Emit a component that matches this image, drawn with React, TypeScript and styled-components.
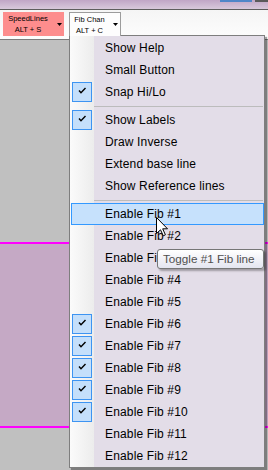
import React from 'react'
import styled, { createGlobalStyle } from 'styled-components'

const GlobalStyle = createGlobalStyle`
  html, body {
    margin: 0;
    padding: 0;
    background: #c0c0c0;
    overflow: hidden;
  }
  * {
    box-sizing: border-box;
  }
`

type MenuEntry =
    | { kind: 'item'; label: string; checked?: boolean; active?: boolean }
    | { kind: 'separator' }

const entries: MenuEntry[] = [
    { kind: 'item', label: 'Show Help' },
    { kind: 'item', label: 'Small Button' },
    { kind: 'item', label: 'Snap Hi/Lo', checked: true },
    { kind: 'separator' },
    { kind: 'item', label: 'Show Labels', checked: true },
    { kind: 'item', label: 'Draw Inverse' },
    { kind: 'item', label: 'Extend base line' },
    { kind: 'item', label: 'Show Reference lines' },
    { kind: 'separator' },
    ...Array.from({ length: 12 }, (_, i): MenuEntry => ({
        kind: 'item',
        label: `Enable Fib #${i + 1}`,
        checked: i >= 5 && i <= 9,
        active: i === 0,
    })),
]

export default function App() {
    return (
        <Screen>
            <GlobalStyle />
            <TitleStrip>
                <TitleTab $tone="blue" />
                <TitleTab $tone="dark" />
            </TitleStrip>

            <Toolbar>
                <ToolButton $tone="alert">
                    <ButtonLabel>
                        <span>SpeedLines</span>
                        <span>ALT + S</span>
                    </ButtonLabel>
                    <DropArrow />
                </ToolButton>
                <ToolButton $tone="open">
                    <ButtonLabel>
                        <span>Fib Chan</span>
                        <span>ALT + C</span>
                    </ButtonLabel>
                    <DropArrow />
                </ToolButton>
            </Toolbar>

            <ChartArea>
                <Band $tone="empty" $height={202} />
                <Band $tone="line" $height={2} />
                <Band $tone="pane" $height={182} />
                <Band $tone="line" $height={2} />
                <Band $tone="empty" />
            </ChartArea>

            <Menu>
                {entries.map((entry, i) =>
                    entry.kind === 'separator' ? (
                        <Separator key={i} />
                    ) : (
                        <Row key={i} $active={entry.active}>
                            <CheckSlot $checked={entry.checked}>
                                {entry.checked && (
                                    <svg width="18" height="18" viewBox="0 0 18 18">
                                        <polyline
                                            points="6,7.5 8,9.8 12.5,5"
                                            fill="none"
                                            stroke="#000"
                                            strokeWidth="1.4"
                                        />
                                    </svg>
                                )}
                            </CheckSlot>
                            <RowText>{entry.label}</RowText>
                        </Row>
                    )
                )}
            </Menu>

            <Tooltip>Toggle #1 Fib line</Tooltip>
            <Cursor />
        </Screen>
    )
}

function DropArrow() {
    return (
        <Arrow width="5" height="3" viewBox="0 0 5 3">
            <polygon points="0,0 5,0 2.5,3" fill="#000" />
        </Arrow>
    )
}

function Cursor() {
    return (
        <Pointer width="13" height="20" viewBox="0 0 13 20">
            <path
                d="M0.5 0.5 L0.5 16.5 L4.5 12.8 L7.3 18.8 L9.4 17.8 L6.7 11.8 L11.5 11.8 Z"
                fill="#fff"
                stroke="#000"
                strokeWidth="1"
                strokeLinejoin="miter"
            />
        </Pointer>
    )
}

const Screen = styled.div`
  position: relative;
  width: 268px;
  height: 470px;
  display: flex;
  flex-direction: column;
  overflow: hidden;
  font-family: "Liberation Sans", Arial, sans-serif;
`

const TitleStrip = styled.div`
  height: 9px;
  display: flex;
  justify-content: flex-end;
  align-items: flex-start;
  gap: 2px;
  background: linear-gradient(#c0a6c6, #d8c9dc);
`

const TitleTab = styled.div<{ $tone: 'blue' | 'dark' }>`
  height: 2px;
  width: ${p => (p.$tone === 'blue' ? '32px' : '13px')};
  margin-right: ${p => (p.$tone === 'blue' ? '1px' : '0')};
  background: ${p => (p.$tone === 'blue' ? '#4f86c8' : '#5a5a5a')};
`

const Toolbar = styled.div`
  height: 31px;
  display: flex;
  align-items: flex-start;
  gap: 5px;
  padding: 2px 0 0 3px;
  border-top: 1px solid #5e5e5e;
  border-bottom: 1px solid #7c7c7c;
  background: linear-gradient(#f5f5f5, #fdfdfd);
`

const ToolButton = styled.div<{ $tone: 'alert' | 'open' }>`
  position: relative;
  z-index: 2;
  display: flex;
  align-items: center;
  height: 24px;
  width: ${p => (p.$tone === 'alert' ? '61px' : '52px')};
  color: #000;
  background: ${p => (p.$tone === 'alert' ? '#fd8d8d' : '#fdfdfd')};
  border: ${p => (p.$tone === 'alert' ? 'none' : '1px solid #9c9c9c')};
  border-bottom: none;
`

const ButtonLabel = styled.div`
  flex: 1;
  display: flex;
  flex-direction: column;
  align-items: center;
  font-size: 7.5px;
  line-height: 11px;
  white-space: nowrap;
`

const Arrow = styled.svg`
  flex: none;
  margin: 0 2px 0 4px;
`

const ChartArea = styled.div`
  flex: 1;
  display: flex;
  flex-direction: column;
`

const bandColors = {
    empty: '#c0c0c0',
    line: '#ff00ff',
    pane: '#c5a9c5',
}

const Band = styled.div<{ $tone: keyof typeof bandColors; $height?: number }>`
  background: ${p => bandColors[p.$tone]};
  ${p => (p.$height ? `height: ${p.$height}px; flex: none;` : 'flex: 1;')}
`

const Menu = styled.div`
  position: absolute;
  z-index: 1;
  left: 69px;
  top: 35px;
  width: 196px;
  height: 433px;
  padding-top: 1px;
  border: 1px solid #7e7e7e;
  background: linear-gradient(to right, #fbfbfb, #ececec 24px, #e3dde8 24px);
  box-shadow: 2px 2px 1px rgba(0, 0, 0, 0.35);
`

const Row = styled.div<{ $active?: boolean }>`
  display: flex;
  align-items: center;
  height: 22px;
  margin-left: 1px;
  border: 1px solid ${p => (p.$active ? '#3399ff' : 'transparent')};
  background: ${p => (p.$active ? '#c6e1fc' : 'transparent')};
`

const CheckSlot = styled.div<{ $checked?: boolean }>`
  flex: none;
  width: 20px;
  height: 20px;
  border: 1px solid ${p => (p.$checked ? '#3d94f2' : 'transparent')};
  background: ${p => (p.$checked ? '#c4dffb' : 'transparent')};
`

const RowText = styled.span`
  margin-left: 13px;
  font-size: 12px;
  letter-spacing: 0.15px;
  color: #000;
  white-space: nowrap;
`

const Separator = styled.div`
  height: 1px;
  margin: 3px 1px 2px 24px;
  background: #bcbcbc;
`

const Tooltip = styled.div`
  position: absolute;
  z-index: 3;
  left: 157px;
  top: 249px;
  width: 107px;
  height: 20px;
  padding-left: 5px;
  border: 1px solid #767676;
  border-radius: 3px;
  background: linear-gradient(#ffffff, #e4e5f0);
  box-shadow: 2px 2px 2px rgba(0, 0, 0, 0.3);
  font-size: 11.7px;
  line-height: 18px;
  color: #4f4f4f;
  white-space: nowrap;
`

const Pointer = styled.svg`
  position: absolute;
  z-index: 4;
  left: 156px;
  top: 217px;
`
